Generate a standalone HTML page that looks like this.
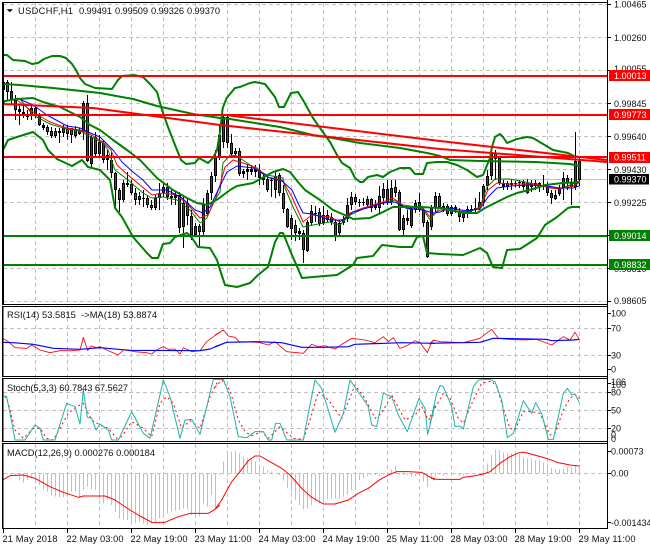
<!DOCTYPE html>
<html>
<head>
<meta charset="utf-8">
<style>
html,body{margin:0;padding:0;background:#fff;width:650px;height:550px;overflow:hidden}
svg{display:block}
text{font-family:"Liberation Sans",sans-serif;font-size:9.3px;fill:#111}
.l{font-size:9px}
.w{font-size:9px;fill:#fff}
</style>
</head>
<body>
<svg width="650" height="550" viewBox="0 0 650 550" xmlns="http://www.w3.org/2000/svg">
<rect width="650" height="550" fill="#fff"/>

<!-- grids -->
<g fill="none" stroke="#c0c0c0" stroke-width="1" stroke-dasharray="4 3" shape-rendering="crispEdges">
<path d="M35.5 3V528M67.5 3V528M99.5 3V528M131.5 3V528M163.5 3V528M195.5 3V528M227.5 3V528M259.5 3V528M291.5 3V528M323.5 3V528M355.5 3V528M387.5 3V528M419.5 3V528M451.5 3V528M483.5 3V528M515.5 3V528M547.5 3V528M579.5 3V528"/>
<path d="M3 4.5H607M3 37.5H607M3 70.5H607M3 103.5H607M3 136.5H607M3 169.5H607M3 202.5H607M3 235.5H607M3 268.5H607M3 301.5H607"/>
<path d="M3 328.5H607M3 355.5H607M3 392.5H607M3 410.5H607M3 428.5H607M3 473.5H607"/>
</g>
<path d="M3 179.5H607" stroke="#c0c0c0" stroke-width="1" shape-rendering="crispEdges"/>

<!-- candle wicks -->
<path fill="none" stroke="#000" stroke-width="1" shape-rendering="crispEdges" d="M3.5 80V92M7.5 80V100M11.5 82V105M15.5 95V120M19.5 105V125M23.5 105V118M27.5 110V120M31.5 105V120M35.5 105V118M39.5 113V126M43.5 123V130M47.5 125V135M51.5 127V138M55.5 128V138M59.5 128V143M63.5 125V137M67.5 125V140M71.5 128V143M75.5 126V138M79.5 128V135M83.5 101V140M87.5 95V162M91.5 135V168M95.5 132V157M99.5 135V158M103.5 140V163M107.5 150V170M111.5 152V178M115.5 172V208M119.5 188V212M123.5 180V202M127.5 172V187M131.5 180V195M135.5 188V205M139.5 192V205M143.5 190V207M147.5 195V208M151.5 200V210M155.5 195V210M159.5 183V210M163.5 183V197M167.5 183V200M171.5 190V205M175.5 192V205M179.5 192V233M183.5 195V248M187.5 198V225M191.5 210V240M195.5 223V236M199.5 224V246M203.5 198V235M207.5 190V215M211.5 172V200M215.5 150V182M219.5 125V160M223.5 115V148M227.5 115V148M231.5 134V156M235.5 148V158M239.5 148V176M243.5 169V178M247.5 164V180M251.5 165V175M255.5 165V177M259.5 164V185M263.5 174V185M267.5 177V192M271.5 178V197M275.5 172V198M279.5 173V196M283.5 185V213M287.5 208V228M291.5 215V240M295.5 220V241M299.5 228V240M303.5 230V263M307.5 220V252M311.5 205V225M315.5 206V222M319.5 208V226M323.5 206V225M327.5 210V222M331.5 213V225M335.5 220V241M339.5 220V235M343.5 216V225M347.5 198V222M351.5 192V210M355.5 194V205M359.5 199V207M363.5 198V206M367.5 196V207M371.5 198V212M375.5 200V210M379.5 186V213M383.5 183V205M387.5 180V205M391.5 180V205M395.5 180V197M399.5 190V231M403.5 215V235M407.5 210V225M411.5 206V228M415.5 200V213M419.5 193V212M423.5 208V227M427.5 220V258M431.5 205V230M435.5 192V212M439.5 193V208M443.5 203V212M447.5 204V216M451.5 205V216M455.5 205V213M459.5 208V222M463.5 211V222M467.5 206V218M471.5 205V214M475.5 198V212M479.5 192V210M483.5 184V206M487.5 170V190M491.5 148V180M495.5 150V180M499.5 156V185M503.5 180V190M507.5 181V190M511.5 180V190M515.5 181V187M519.5 180V188M523.5 180V190M527.5 179V194M531.5 180V192M535.5 180V190M539.5 182V192M543.5 175V190M547.5 182V196M551.5 190V204M555.5 190V200M559.5 185V196M563.5 172V200M567.5 175V190M571.5 178V205M575.5 132V190M579.5 157V186"/>
<!-- candle bodies outline -->
<path fill="none" stroke="#000" stroke-width="3" shape-rendering="crispEdges" d="M3.5 82V90M7.5 82V92M11.5 91V100M15.5 100V110M19.5 109V112M23.5 112V116M27.5 114V117M31.5 108V116M35.5 108V115M39.5 115V125M43.5 125V128M47.5 127V132M51.5 131V136M55.5 131V136M59.5 131V133M63.5 128V133M67.5 128V134M71.5 128V135M75.5 130V136M79.5 130V134M83.5 103V132M87.5 103V161M91.5 137V164M95.5 137V154M99.5 142V154M103.5 143V160M107.5 155V160M111.5 160V173M115.5 173V190M119.5 190V200M123.5 183V200M127.5 183V185M131.5 184V193M135.5 193V200M139.5 196V200M143.5 198V199M147.5 198V205M151.5 205V208M155.5 198V208M159.5 193V198M163.5 187V193M167.5 187V197M171.5 196V198M175.5 195V198M179.5 195V228M183.5 203V227M187.5 203V216M191.5 216V235M195.5 226V235M199.5 226V232M203.5 205V232M207.5 193V214M211.5 176V193M215.5 157V176M219.5 135V157M223.5 117V142M227.5 117V143M231.5 143V154M235.5 151V154M239.5 151V174M243.5 171V174M247.5 169V172M251.5 169V172M255.5 169V172M259.5 170V178M263.5 177V180M267.5 179V190M271.5 180V181M275.5 176V190M279.5 175V193M283.5 193V209M287.5 209V227M291.5 218V229M295.5 225V233M299.5 231V234M303.5 233V250M307.5 222V251M311.5 211V223M315.5 213V214M319.5 212V224M323.5 215V223M327.5 215V220M331.5 217V222M335.5 222V237M339.5 223V233M343.5 219V223M347.5 205V219M351.5 197V205M355.5 197V202M359.5 202V203M363.5 202V203M367.5 199V205M371.5 199V208M375.5 205V208M379.5 196V208M383.5 189V198M387.5 189V202M391.5 188V202M395.5 187V193M399.5 192V230M403.5 218V230M407.5 218V221M411.5 209V226M415.5 203V210M419.5 202V210M423.5 210V223M427.5 222V257M431.5 208V227M435.5 196V208M439.5 196V207M443.5 206V208M447.5 206V214M451.5 207V214M455.5 207V210M459.5 211V217M463.5 214V218M467.5 209V214M471.5 209V210M475.5 208V210M479.5 202V208M483.5 186V202M487.5 176V186M491.5 152V176M495.5 153V159M499.5 158V183M503.5 183V187M507.5 183V187M511.5 183V185M515.5 183V184M519.5 182V183M523.5 182V187M527.5 183V193M531.5 183V187M535.5 183V185M539.5 183V187M543.5 185V187M547.5 187V193M551.5 193V198M555.5 195V199M559.5 188V194M563.5 178V188M567.5 178V183M571.5 183V187M575.5 161V187M579.5 161V180"/>
<!-- green centres -->
<path fill="none" stroke="#006a18" stroke-width="1" shape-rendering="crispEdges" d="M3.5 83V89M11.5 92V99M31.5 109V115M39.5 116V124M51.5 132V135M63.5 129V132M75.5 131V135M79.5 131V133M83.5 104V131M91.5 138V163M99.5 143V153M123.5 184V199M139.5 197V199M155.5 199V207M159.5 194V197M163.5 188V192M183.5 204V226M195.5 227V234M203.5 206V231M207.5 194V213M211.5 177V192M215.5 158V175M219.5 136V156M223.5 118V141M235.5 152V153M275.5 177V189M291.5 219V228M307.5 223V250M311.5 212V222M323.5 216V222M339.5 224V232M343.5 220V222M347.5 206V218M351.5 198V204M367.5 200V204M379.5 197V207M383.5 190V197M387.5 190V201M391.5 189V201M403.5 219V229M411.5 210V225M415.5 204V209M431.5 209V226M435.5 197V207M451.5 208V213M467.5 210V213M479.5 203V207M483.5 187V201M487.5 177V185M491.5 153V175M507.5 184V186M527.5 184V192M531.5 184V186M559.5 189V193M563.5 179V187M575.5 162V186"/>
<!-- red centres -->
<path fill="none" stroke="#ff0000" stroke-width="1" shape-rendering="crispEdges" d="M7.5 83V91M15.5 101V109M35.5 109V114M47.5 128V131M55.5 132V135M67.5 129V133M71.5 129V134M87.5 104V160M95.5 138V153M103.5 144V159M111.5 161V172M115.5 174V189M119.5 191V199M131.5 185V192M135.5 194V199M147.5 199V204M151.5 206V207M167.5 188V196M179.5 196V227M187.5 204V215M191.5 217V234M199.5 227V231M227.5 118V142M231.5 144V153M239.5 152V173M259.5 171V177M267.5 180V189M279.5 176V192M283.5 194V208M287.5 210V226M295.5 226V232M303.5 234V249M319.5 213V223M327.5 216V219M331.5 218V221M335.5 223V236M355.5 198V201M371.5 200V207M395.5 188V192M399.5 193V229M419.5 203V209M423.5 211V222M427.5 223V256M439.5 197V206M447.5 207V213M459.5 212V216M463.5 215V217M495.5 154V158M499.5 159V182M523.5 183V186M547.5 188V192M551.5 194V197M555.5 196V198M567.5 179V182M571.5 184V186M579.5 162V179"/>

<!-- moving averages -->
<g fill="none" stroke-width="1" stroke-linejoin="round">
<polyline stroke="#008000" points="20,99 33,115 50,124 67,129 80,131 103,143 108,150 115,170 128,180 143,193 152,198 163,197 177,200 190,210 200,223 207,218 213,203 220,192 223,163 230,155 237,156 253,167 267,175 283,178 285,188 293,207 303,227 313,225 330,222 340,225 350,215 363,209 387,202 395,200 407,209 423,209 430,220 440,207 450,211 467,213 480,207 487,187 495,179 510,179 530,183 547,187 560,189 570,185 579,181"/>
<polyline stroke="#ff0000" points="17,100 33,112 50,122 67,128 80,130 88,133 103,142 111,150 117,165 128,175 140,185 152,195 163,193 177,195 190,207 200,218 208,215 215,200 220,185 225,167 233,160 243,163 257,168 267,177 282,180 292,197 303,222 312,215 330,217 340,222 350,213 363,208 383,202 393,198 403,205 423,208 430,217 440,210 450,210 467,212 480,208 488,190 497,183 510,184 537,184 550,188 560,189 573,186 579,183"/>
<polyline stroke="#0000ff" points="17,98 33,105 47,115 67,126 80,128 88,132 100,137 113,150 122,162 133,172 143,180 152,190 167,190 182,198 195,210 203,213 210,207 220,186 227,172 237,166 253,168 270,178 282,181 292,190 298,203 303,213 313,214 330,220 343,220 353,212 367,208 383,203 395,202 407,208 423,210 433,213 440,212 450,208 467,211 480,209 488,197 497,188 510,186 530,185 547,186 560,188 573,188 579,186"/>
</g>

<!-- bands -->
<g fill="none" stroke="#008000" stroke-width="2" stroke-linejoin="round">
<polyline points="3,55 7,55 13,60 25,61 32,64 38,63 44,59 52,56 60,56 66,58 72,64 76,70 80,78 85,84 95,88 112,89 118,80 122,76 134,75 143,77 150,84 157,92 162,110 168,127 175,145 181,160 186,164 195,163 199,158 208,163 213,158 217,150 220,132 222.7,108 226.7,98 235,88 240,87 250,83 255,82 265,84 275,97 279,107 284,107 291,93 298,92 303,100 313,118 320,128 330,142 337,155 342,163 350,168 355,178 360,182 363,182 368,177 377,175 383,177 390,172 400,168 410,168 415,174 423,174 427,163 437,162 447,162 457,165 467,170 477,177 483,175 490,158 492,147 495,137 500,134 503,137 507,143 517,139 527,137 533,138 543,144 553,150 568,153 576,157"/>
<polyline points="3,84 20,85 53,88 100,93 133,99 157,106 193,114 220,118 230,119 280,127 317,136 327,137 360,143 400,148 427,153 440,156 450,160 480,161 536,162 570,164 579,166"/>
<polyline points="3,103 5,101 17,99 33,98 43,102 60,107 80,117 90,125 100,130 113,140 127,150 140,160 157,178 173,190 187,198 197,203 207,205 218,199 230,190 237,186 253,183 273,172 283,169 290,172 298,182 305,190 320,200 333,210 347,216 353,219 370,218 383,212 393,207 420,207 440,208 447,209 463,213 477,213 485,208 497,202 507,197 517,193 533,189 545,185 563,183 580,182"/>
<polyline points="3,150 8,140 17,137 33,132 43,140 48,150 57,159 72,166 82,160 88,167 100,170 110,180 115,208 122,217 133,237 147,253 152,258 158,258 163,244 170,243 175,237 187,233 192,238 198,247 210,248 217,260 220,270 225,285 237,287 250,283 258,275 268,267 275,242 280,233 283,233 292,255 302,278 313,277 337,275 353,265 357,258 373,256 382,245 400,247 412,247 417,237 423,236 427,253 440,254 463,255 480,248 487,253 493,267 502,268 507,250 520,249 537,238 545,225 557,217 568,208 572,207 580,207"/>
</g>

<!-- sloped + horizontal lines -->
<g fill="none" stroke="#ff0000" stroke-width="2">
<polyline points="3,104 93,108 220,125 440,149 607,162"/>
<polyline points="225,115 440,141 607,160"/>
<path d="M3 76H607M3 115H607M3 157H607"/>
</g>
<path d="M3 236H607M3 265H607" fill="none" stroke="#008000" stroke-width="2"/>

<!-- RSI -->
<g transform="translate(0,300) scale(.33333)" fill="none" stroke-width="3" stroke-linejoin="round">
<polyline stroke="#ff0000" stroke-width="2.5" points="8,115 25,125 45,143 80,145 95,135 120,150 150,158 180,152 215,152 240,150 250,112 263,152 273,138 290,143 300,140 320,150 355,165 370,150 390,152 405,155 440,158 455,162 470,150 490,140 505,148 525,147 540,162 550,143 575,155 600,152 620,125 640,110 660,97"/>
<polyline stroke="#0000ff" stroke-width="3.5" points="8,127 40,128 100,133 160,145 240,148 300,143 390,151 600,152 630,147 660,135"/>
</g>
<g transform="translate(215,300) scale(.33333)" fill="none" stroke-width="3" stroke-linejoin="round">
<polyline stroke="#ff0000" stroke-width="2.5" points="0,105 25,90 40,108 60,112 72,125 130,127 160,135 180,125 215,155 265,160 290,133 310,140 330,137 360,147 380,133 410,115 450,120 480,128 505,110 520,125 535,113 555,145 580,135 600,122 615,128 637,158 650,125 660,120"/>
<polyline stroke="#0000ff" stroke-width="3.5" points="0,140 35,127 130,125 200,128 260,142 330,142 400,140 420,133 560,128 660,130"/>
</g>
<g transform="translate(430,300) scale(.33333)" fill="none" stroke-width="3" stroke-linejoin="round">
<polyline stroke="#ff0000" stroke-width="2.5" points="0,135 10,120 30,125 100,128 150,115 185,88 205,115 235,118 280,120 320,118 365,135 400,110 420,120 435,97 448,118"/>
<polyline stroke="#0000ff" stroke-width="3.5" points="0,130 150,127 190,115 350,118 365,122 430,120 448,118"/>
</g>

<!-- Stochastic -->
<g transform="translate(0,300) scale(.33333)" fill="none" stroke-width="3" stroke-linejoin="round">
<polyline stroke="#ff0000" stroke-dasharray="6 9" points="8,275 25,310 45,390 70,415 100,385 120,385 140,415 160,420 205,340 230,320 250,310 275,360 300,375 325,385 350,415 365,410 395,365 430,385 455,410 480,310 500,290 520,310 545,385 570,362 600,385 630,290 655,240"/>
<polyline stroke="#20b2aa" stroke-width="3" points="8,288 20,290 30,340 45,420 75,420 105,375 120,385 130,420 165,420 200,310 225,320 240,372 250,270 262,352 275,355 288,390 300,372 325,390 335,420 355,420 395,335 430,400 450,415 490,240 510,290 540,415 555,360 575,358 600,403 640,238 660,238"/>
</g>
<g transform="translate(215,300) scale(.33333)" fill="none" stroke-width="3" stroke-linejoin="round">
<polyline stroke="#ff0000" stroke-dasharray="6 9" points="0,262 20,240 45,270 70,360 90,395 110,407 140,395 160,415 195,380 235,415 265,418 285,360 310,275 340,300 380,355 420,255 450,295 480,355 500,340 530,285 570,360 600,345 620,320 640,360 660,340"/>
<polyline stroke="#20b2aa" stroke-width="3" points="0,238 25,238 45,290 70,410 95,413 120,395 145,395 160,420 170,420 182,370 195,370 215,420 265,420 280,340 300,240 320,265 360,397 385,340 405,240 440,290 460,320 470,375 485,380 505,280 530,290 550,345 577,395 612,295 630,325 638,403 660,315"/>
</g>
<g transform="translate(430,300) scale(.33333)" fill="none" stroke-width="3" stroke-linejoin="round">
<polyline stroke="#ff0000" stroke-dasharray="6 9" points="0,350 40,280 60,295 85,355 100,370 130,300 155,250 185,243 200,260 225,340 240,385 255,390 280,335 305,335 330,340 360,405 375,400 400,330 420,295 435,283 448,295"/>
<polyline stroke="#20b2aa" stroke-width="3" points="0,372 20,280 30,257 40,260 65,320 75,380 90,378 100,387 130,260 145,240 180,238 195,245 215,300 232,413 250,400 280,302 305,340 317,308 335,340 355,418 370,418 400,280 412,265 425,285 435,282 448,308"/>
</g>

<!-- MACD histogram -->
<g transform="translate(0,440) scale(.33333)" fill="none" stroke="#c0c0c0" stroke-width="3">
<path d="M10.5 100V100M22.5 100V102M34.5 100V105M46.5 100V108M58.5 100V120M70.5 100V128M82.5 100V120M94.5 100V115M106.5 100V115M118.5 100V135M130.5 100V148M142.5 100V155M154.5 100V165M166.5 100V170M178.5 100V172M190.5 100V172M202.5 100V165M214.5 100V155M226.5 100V155M238.5 100V170M250.5 100V150M262.5 100V140M274.5 100V148M286.5 100V150M298.5 100V175M310.5 100V190M322.5 100V180M334.5 100V195M346.5 100V215M358.5 100V235M370.5 100V238M382.5 100V240M394.5 100V245M406.5 100V250M418.5 100V245M430.5 100V250M442.5 100V255M454.5 100V250M466.5 100V245M478.5 100V235M490.5 100V225M502.5 100V220M514.5 100V215M526.5 100V212M538.5 100V210M550.5 100V205M562.5 100V208M574.5 100V225M586.5 100V230M598.5 100V228M610.5 100V190M622.5 100V200M634.5 100V165M646.5 100V205"/>
<polyline stroke="#ff0000" stroke-width="3" stroke-linejoin="round" points="8,120 30,107 70,105 105,115 150,140 190,157 235,172 250,168 315,168 345,180 390,210 420,228 455,247 495,247 530,232 570,220 625,220 645,208 660,195"/>
</g>
<g transform="translate(215,440) scale(.33333)" fill="none" stroke="#c0c0c0" stroke-width="3">
<path d="M13.5 100V105M25.5 100V65M37.5 100V45M49.5 100V35M61.5 100V33M73.5 100V40M85.5 100V50M97.5 100V55M109.5 100V60M121.5 100V65M133.5 100V75M145.5 100V80M157.5 100V90M169.5 100V95M181.5 100V100M193.5 100V105M205.5 100V122M217.5 100V145M229.5 100V155M241.5 100V180M253.5 100V195M265.5 100V208M277.5 100V205M289.5 100V195M301.5 100V185M313.5 100V190M325.5 100V185M337.5 100V178M349.5 100V175M361.5 100V175M373.5 100V175M385.5 100V170M397.5 100V165M409.5 100V150M421.5 100V145M433.5 100V120M445.5 100V115M457.5 100V108M469.5 100V105M481.5 100V105M493.5 100V108M505.5 100V102M517.5 100V98M529.5 100V88M541.5 100V78M553.5 100V105M565.5 100V105M577.5 100V105M589.5 100V110M601.5 100V108M613.5 100V110M625.5 100V125M637.5 100V140M649.5 100V118"/>
<polyline stroke="#ff0000" stroke-width="3" stroke-linejoin="round" points="0,208 20,180 50,125 75,95 100,62 120,48 135,48 165,65 200,85 225,105 260,145 290,172 325,192 360,192 400,180 430,160 460,145 490,122 520,105 545,95 580,95 620,97 660,120"/>
</g>
<g transform="translate(430,440) scale(.33333)" fill="none" stroke="#c0c0c0" stroke-width="3">
<path d="M16.5 100V108M28.5 100V103M40.5 100V108M52.5 100V103M64.5 100V105M76.5 100V103M88.5 100V107M100.5 100V107M112.5 100V103M124.5 100V102M136.5 100V101M148.5 100V103M160.5 100V95M172.5 100V70M184.5 100V45M196.5 100V28M208.5 100V30M220.5 100V37M232.5 100V40M244.5 100V40M256.5 100V42M268.5 100V42M280.5 100V52M292.5 100V55M304.5 100V55M316.5 100V60M328.5 100V62M340.5 100V68M352.5 100V70M364.5 100V85M376.5 100V87M388.5 100V88M400.5 100V85M412.5 100V82M424.5 100V82M436.5 100V75M448.5 100V80"/>
<polyline stroke="#ff0000" stroke-width="3" stroke-linejoin="round" points="0,112 20,118 90,118 100,112 130,108 160,102 180,95 210,70 240,50 270,37 285,37 350,55 385,68 420,75 448,78"/>
</g>

<!-- frames -->
<g fill="none" stroke="#000" stroke-width="1" shape-rendering="crispEdges">
<path d="M2.5 2V305M3.5 2V305"/>
<path d="M2.5 306V376M2.5 378V441M2.5 443V529M3 306V376M3 378V441M3 443V529"/>
<path d="M2 2.5H608M2 304.5H608M2 306.5H608M2 376.5H608M2 378.5H608M2 441.5H608M2 443.5H608M2 528.5H608"/>
<path d="M607.5 0V529"/>
<!-- ticks -->
<path d="M607 4.5H611M607 37.5H611M607 70.5H611M607 103.5H611M607 136.5H611M607 169.5H611M607 202.5H611M607 235.5H611M607 268.5H611M607 301.5H611M607 313.5H611M607 328.5H611M607 355.5H611M607 369.5H611M607 383.5H611M607 392.5H611M607 410.5H611M607 428.5H611M607 451.5H611M607 473.5H611M607 522.5H611"/>
<path d="M3.5 529V533M67.5 529V533M131.5 529V533M195.5 529V533M259.5 529V533M323.5 529V533M387.5 529V533M451.5 529V533M515.5 529V533M579.5 529V533"/>
</g>

<!-- header -->
<path d="M6.7 9.3H12.9L9.8 12.3Z" fill="#000"/>
<text x="18" y="14" font-size="9.5" textLength="55">USDCHF,H1</text>
<text x="79" y="14" textLength="33">0.99491</text>
<text x="115" y="14" textLength="33">0.99509</text>
<text x="151" y="14" textLength="33">0.99326</text>
<text x="187" y="14" textLength="33">0.99370</text>

<text x="7" y="318" textLength="150" xml:space="preserve">RSI(14) 53.5815  -&gt;MA(18) 53.8874</text>
<text x="7" y="391" textLength="121">Stoch(5,3,3) 60.7843 67.5627</text>
<text x="7" y="456" textLength="148">MACD(12,26,9) 0.000276 0.000184</text>

<!-- price scale -->
<g class="s">
<text class="l" x="614" y="7.5">1.00465</text>
<text class="l" x="614" y="41">1.00260</text>
<text class="l" x="614" y="72">1.00055</text>
<text class="l" x="614" y="107">0.99845</text>
<text class="l" x="614" y="140">0.99640</text>
<text class="l" x="614" y="173">0.99430</text>
<text class="l" x="614" y="206">0.99225</text>
<text class="l" x="614" y="272">0.98810</text>
<text class="l" x="614" y="304">0.98605</text>

<rect x="609" y="70" width="41" height="11" fill="#ff0000"/>
<text class="w" x="614" y="79">1.00013</text>
<rect x="609" y="109" width="41" height="11" fill="#ff0000"/>
<text class="w" x="614" y="118">0.99773</text>
<rect x="609" y="152" width="41" height="11" fill="#ff0000"/>
<text class="w" x="614" y="160.5">0.99511</text>
<rect x="609" y="174" width="40" height="10.5" fill="#000"/>
<text class="w" x="614" y="182.5">0.99370</text>
<rect x="609" y="230" width="41" height="11" fill="#008000"/>
<text class="w" x="614" y="239">0.99014</text>
<rect x="609" y="259" width="41" height="11" fill="#008000"/>
<text class="w" x="614" y="268">0.98832</text>

<text class="l" x="611" y="316.5">100</text>
<text class="l" x="611" y="331.5">70</text>
<text class="l" x="611" y="358.5">30</text>
<text class="l" x="611" y="372.5">0</text>
<text class="l" x="611" y="385">106</text>
<text class="l" x="611" y="388">100</text>
<text class="l" x="611" y="395.5">80</text>
<text class="l" x="611" y="413.5">50</text>
<text class="l" x="611" y="431.5">20</text>
<text class="l" x="611" y="438">0</text>
<text class="l" x="611" y="442">0</text>
<text class="l" x="611" y="454.5">0.00073</text>
<text class="l" x="611" y="476.5">0.00</text>
<text class="l" x="611" y="526">-0.001434</text>
</g>

<!-- time scale -->
<text x="2.5" y="542" textLength="55">21 May 2018</text>
<text x="66.5" y="542" textLength="57">22 May 03:00</text>
<text x="130.5" y="542" textLength="57">22 May 19:00</text>
<text x="194.5" y="542" textLength="57">23 May 11:00</text>
<text x="258.5" y="542" textLength="57">24 May 03:00</text>
<text x="322.5" y="542" textLength="57">24 May 19:00</text>
<text x="386.5" y="542" textLength="57">25 May 11:00</text>
<text x="450.5" y="542" textLength="57">28 May 03:00</text>
<text x="514.5" y="542" textLength="57">28 May 19:00</text>
<text x="578.5" y="542" textLength="57">29 May 11:00</text>
</svg>
</body>
</html>
